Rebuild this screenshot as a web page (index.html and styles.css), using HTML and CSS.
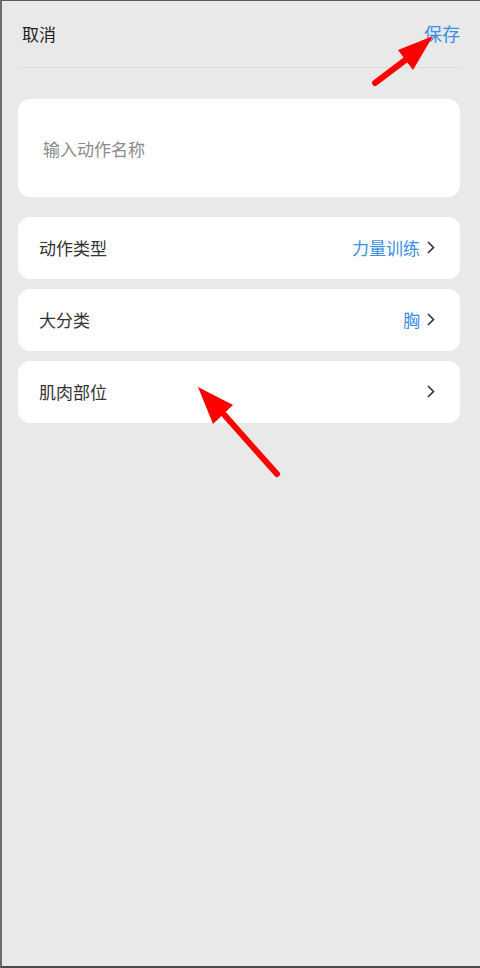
FILE: index.html
```html
<!DOCTYPE html>
<html lang="zh-CN">
<head>
<meta charset="utf-8">
<link rel="stylesheet" href="styles.css">
</head>
<body>
<div class="page">
  <header class="topbar">
    <span class="cancel">取消</span>
    <span class="save">保存</span>
  </header>
  <main class="content">
    <div class="card name-card">
      <span class="placeholder">输入动作名称</span>
    </div>
    <div class="card row">
      <span class="label">动作类型</span>
      <span class="value">力量训练</span>
      <svg class="chev" viewBox="0 0 8 13"><path d="M1 1 L6.5 6.5 L1 12" fill="none" stroke="#333" stroke-width="1.6"/></svg>
    </div>
    <div class="card row">
      <span class="label">大分类</span>
      <span class="value">胸</span>
      <svg class="chev" viewBox="0 0 8 13"><path d="M1 1 L6.5 6.5 L1 12" fill="none" stroke="#333" stroke-width="1.6"/></svg>
    </div>
    <div class="card row">
      <span class="label">肌肉部位</span>
      <span class="value"></span>
      <svg class="chev" viewBox="0 0 8 13"><path d="M1 1 L6.5 6.5 L1 12" fill="none" stroke="#333" stroke-width="1.6"/></svg>
    </div>
  </main>
  <svg class="arrows" viewBox="0 0 480 968" width="480" height="968">
    <line x1="375" y1="83" x2="408" y2="58" stroke="#f00" stroke-width="6" stroke-linecap="round"/>
    <polygon points="433,36 398,50 413,70" fill="#f00"/>
    <line x1="277" y1="474" x2="220" y2="410" stroke="#f00" stroke-width="6" stroke-linecap="round"/>
    <polygon points="198,387 233,405 213,424" fill="#f00"/>
  </svg>
</div>
</body>
</html>
```
FILE: styles.css
```css
html, body {
  margin: 0;
  padding: 0;
}
body {
  font-family: "Noto Sans CJK SC", "Noto Sans", sans-serif;
  background: #e9e9e9;
}
.page {
  position: relative;
  box-sizing: border-box;
  width: 480px;
  height: 968px;
  background: #e9e9e9;
  border-top: 1px solid #5a5a5a;
  border-left: 2px solid #6a6a6a;
  border-bottom: 2px solid #4a4a4a;
  overflow: hidden;
}
.topbar {
  display: flex;
  justify-content: space-between;
  align-items: center;
  box-sizing: border-box;
  height: 67px;
  margin: 0 18px 0 16px;
  padding: 0 2px 2px 4px;
  border-bottom: 1px solid #dcdcdc;
  font-size: 17px;
}
.cancel {
  color: #222;
}
.save {
  color: #3a8fe0;
  font-size: 18px;
}
.content {
  display: flex;
  flex-direction: column;
  gap: 10px;
  margin: 31px 20px 0 16px;
}
.card {
  background: #fff;
  border-radius: 12px;
}
.name-card {
  height: 98px;
  display: flex;
  align-items: center;
  padding-left: 25px;
  margin-bottom: 10px;
}
.placeholder {
  color: #8a8a8a;
  font-size: 17px;
}
.row {
  box-sizing: border-box;
  height: 62px;
  display: flex;
  align-items: center;
  padding: 0 25px 2px 21px;
  font-size: 17px;
}
.label {
  color: #333;
  flex: 1;
}
.value {
  color: #3a8fe0;
  margin-right: 7px;
}
.chev {
  width: 8px;
  height: 13px;
}
.arrows {
  position: absolute;
  left: -2px;
  top: -1px;
  pointer-events: none;
}
```
